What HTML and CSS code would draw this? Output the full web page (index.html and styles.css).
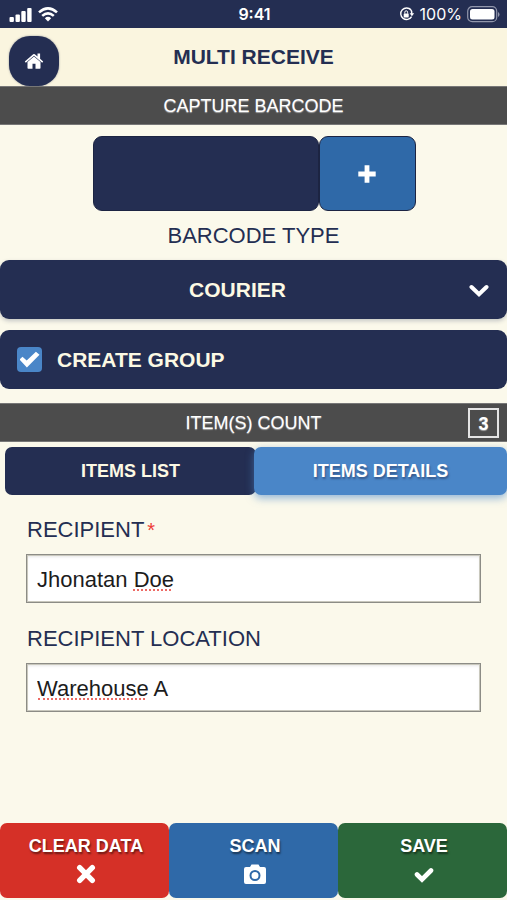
FILE: index.html
```html
<!DOCTYPE html>
<html lang="en">
<head>
<meta charset="utf-8">
<meta name="viewport" content="width=device-width, initial-scale=1">
<title>Multi Receive</title>
<link rel="stylesheet" href="styles.css">
</head>
<body>
<div class="status">
  <div class="status-left">
    <svg width="23" height="15" viewBox="0 0 23 15" fill="#fff" aria-hidden="true"><rect x=".5" y="10" width="4.400" height="5" rx="1"/><rect x="6.500" y="7.500" width="4.400" height="7.500" rx="1"/><rect x="12.300" y="4" width="4.400" height="11" rx="1"/><rect x="18.200" y="1" width="4.400" height="14" rx="1"/></svg>
    <svg width="20" height="15" viewBox="0 0 20 15" fill="none" stroke="#fff" stroke-width="2.6" aria-hidden="true"><path d="M1 5.4Q10-2.6 19 5.4M4.2 8.9Q10 3.7 15.8 8.9"/><path d="M6.8 11.2Q10 8.4 13.2 11.2L10 14.6Z" fill="#fff" stroke="none"/></svg>
  </div>
  <span class="time">9:41</span>
  <div class="status-right">
    <svg width="16" height="14" viewBox="0 0 16 14" aria-hidden="true"><path d="M12 3A5.8 5.8 0 1 0 12.6 9.6M11 1.8A5.8 5.8 0 0 1 12.8 7" fill="none" stroke="#fff" stroke-width="1.4"/><path d="M10.6 6.2h4.6l-2.3 3z" fill="#fff"/><rect x="4.7" y="6.4" width="5" height="4" rx=".6" fill="#fff"/><path d="M5.8 6.6V5.2a1.4 1.4 0 0 1 2.8 0v1.4" fill="none" stroke="#fff"/></svg>
    <span class="percent">100%</span>
    <svg width="33" height="17" viewBox="0 0 33 17" aria-hidden="true"><rect x=".7" y=".7" width="29" height="15" rx="4.5" fill="none" stroke="#9297ac" stroke-width="1.2"/><rect x="3" y="3" width="24.5" height="10.500" rx="2.500" fill="#fff"/><path d="M31 6v5q1.500-.8 1.500-2.500T31 6" fill="#9297ac"/></svg>
  </div>
</div>
<header class="header">
  <button class="home" type="button" aria-label="Home"><svg width="20" height="18" viewBox="0 0 20 18" fill="#fff" aria-hidden="true"><path d="M10 4.600 3.500 10v6q0 .8.8.8h4.200v-5h3v5h4.200q.8 0 .8-.8v-6z"/><path d="M.8 9.600 9.200 2.200q.8-.6 1.600 0L13.500 4.600V1.500h2.600v5.300l3.100 2.800-1 1.200L10 3.700 1.800 10.800z"/></svg></button>
  <h1>MULTI RECEIVE</h1>
</header>
<main>
  <h2 class="bar">CAPTURE BARCODE</h2>
  <div class="capture">
    <input class="code" type="text" aria-label="Barcode">
    <button class="add" type="button" aria-label="Add barcode"><svg width="18" height="18" viewBox="0 0 18 18" aria-hidden="true"><path d="M9 2.700v12.600M2.700 9h12.600" stroke="#fff" stroke-width="4.800" stroke-linecap="square" stroke-linejoin="round"/></svg></button>
  </div>
  <label class="type-label" for="type">BARCODE TYPE</label>
  <div class="select-wrap">
    <select id="type" class="panel"><option>COURIER</option></select>
    <svg class="chevron" width="20" height="14" viewBox="0 0 20 14" aria-hidden="true"><path d="m2.500 3 7.500 7.300L17.500 3" fill="none" stroke="#fff" stroke-width="4" stroke-linecap="round"/></svg>
  </div>
  <label class="panel group"><input type="checkbox" checked>CREATE GROUP</label>
  <h2 class="bar count-bar">ITEM(S) COUNT<span class="count">3</span></h2>
  <div class="tabs" role="tablist">
    <button type="button" role="tab" aria-selected="false">ITEMS LIST</button>
    <button type="button" role="tab" aria-selected="true" class="active">ITEMS DETAILS</button>
  </div>
  <form class="fields">
    <label for="recipient">RECIPIENT<span class="required">*</span></label>
    <div class="field"><input id="recipient" type="text" value="Jhonatan Doe"><span class="typo typo-name"></span></div>
    <label for="location">RECIPIENT LOCATION</label>
    <div class="field"><input id="location" type="text" value="Warehouse A"><span class="typo typo-place"></span></div>
  </form>
</main>
<footer class="actions">
  <button type="button" class="clear">CLEAR DATA<svg width="20" height="20" viewBox="0 0 20 20" aria-hidden="true"><path d="m3.700 3.700 12.600 12.600m0-12.600L3.700 16.300" stroke="#fff" stroke-width="5.400" stroke-linecap="round"/></svg></button>
  <button type="button" class="scan">SCAN<svg width="22" height="20" viewBox="0 0 22 20" aria-hidden="true"><path d="M2 3h4l1.500-2.500h7L16 3h4q2 0 2 2v13q0 2-2 2H2q-2 0-2-2V5q0-2 2-2" fill="#fff"/><circle cx="11" cy="11.500" r="4.500" fill="#fff" stroke="#2f69a8" stroke-width="2"/></svg></button>
  <button type="button" class="save">SAVE<svg width="20" height="20" viewBox="0 0 20 20" aria-hidden="true"><path d="m3 10.500 5 5L17 6.500" fill="none" stroke="#fff" stroke-width="4.600" stroke-linecap="round"/></svg></button>
</footer>
</body>
</html>
```
FILE: styles.css
```css
* { box-sizing: border-box; }
body {
  margin: 0;
  min-height: 100vh;
  display: flex;
  flex-direction: column;
  background: #fbf9eb;
  color: #242e52;
  font-family: "Liberation Sans", Arial, sans-serif;
  font-size: 22px;
  line-height: 24px;
}
button, input, select { font: inherit; margin: 0; border: 0; }
h1, h2 { margin: 0; }
svg { display: block; flex: none; }

.status {
  display: grid;
  grid-template-columns: 1fr auto 1fr;
  align-items: center;
  height: 28px;
  padding: 0 7px 0 9px;
  background: #242e52;
  color: #fff;
  font-family: Inter, "Liberation Sans", sans-serif;
  font-size: 16px;
}
.status-left, .status-right { display: flex; align-items: center; gap: 6px; }
.status-right { justify-content: flex-end; gap: 5px; }
.time { font-weight: 600; }

.header {
  display: grid;
  grid-template-columns: 50px 1fr 50px;
  align-items: center;
  height: 58px;
  padding: 0 9px;
  background: #faf5df;
  text-align: center;
}
.header h1 { font-size: 21px; }
.home {
  display: grid;
  place-items: center;
  width: 50px;
  height: 50px;
  margin-top: 8px;
  padding: 0;
  border-radius: 21px;
  background: #242e52;
  box-shadow: 0 0 2px #242e5280;
}

.bar {
  display: flex;
  align-items: center;
  justify-content: center;
  height: 39px;
  border-top: 1px solid #777;
  border-bottom: 1px solid #777;
  background: #4c4c4c;
  color: #fff;
  font-size: 18px;
  font-weight: 400;
  text-shadow: 0 1px 1px #ffffff80;
}
.capture {
  display: grid;
  grid-template-columns: 7fr 3fr;
  width: 64%;
  height: 75px;
  margin: 11px auto 13px;
  padding-left: 2px;
}
.code, .add { width: 100%; min-width: 0; border: 1px solid #1c2442; border-radius: 9px; }
.code { padding: 0 12px; background: #242e52; color: #fff; }
.add { display: grid; place-items: center; background: #2f69a8; }
.type-label { display: block; margin-bottom: 12px; text-align: center; }

.panel {
  display: flex;
  align-items: center;
  width: 100%;
  height: 59px;
  border-radius: 9px;
  background: #242e52;
  color: #fcf9e4;
  font-size: 21px;
  font-weight: 700;
}
.select-wrap { position: relative; margin-bottom: 11px; }
select.panel {
  appearance: none;
  padding: 0 32px 0 0;
  text-align-last: center;
  box-shadow: 0 2px 4px #242e5240;
}
.chevron { position: absolute; right: 18px; top: 24px; pointer-events: none; }
.group { gap: 15px; padding: 0 17px; margin-bottom: 14px; }
.group input {
  appearance: none;
  width: 25px;
  height: 25px;
  border-radius: 4px;
  background: #4a86c8;
  display: grid;
  place-items: center;
}
.group input:checked::before {
  content: "";
  width: 20px;
  height: 18px;
  background: #fff;
  clip-path: polygon(0 50%, 15% 35%, 36% 56%, 82% 7%, 100% 23%, 37% 94%);
}
.count-bar { display: grid; grid-template-columns: 1fr auto 1fr; padding: 0 8px; }
.count-bar::before { content: ""; }
.count {
  justify-self: end;
  width: 31px;
  height: 30px;
  border: 2px solid #e4e4e4;
  line-height: 28px;
  text-align: center;
  font-weight: 700;
}

.tabs { display: grid; grid-template-columns: 1fr 1fr; padding: 5px 0 0 5px; }
.tabs button {
  height: 48px;
  border-radius: 7px;
  background: #242e52;
  color: #fcf9e4;
  font-size: 18px;
  font-weight: 700;
}
.tabs .active {
  position: relative;
  margin-left: -2px;
  background: #4a86c8;
  color: #fff;
  text-shadow: 1px 2px 2px #242e5280;
  box-shadow: 0 3px 9px #4a86c899;
}
.fields { padding: 23px 26px 0; }
.fields label { display: block; margin-bottom: 12px; padding-left: 1px; }
.required { margin-left: 3px; color: #ee3c36; font-size: 20px; }
.field { position: relative; margin-bottom: 24px; }
.field input {
  display: block;
  width: 100%;
  height: 49px;
  padding: 2px 10px 0;
  border: 1px solid #8c8c86;
  outline: 1px solid #c9c8bd;
  outline-offset: -2px;
  background: #fff;
  color: #1c1c1c;
  box-shadow: inset 0 2px 3px #0000001a;
}
.typo { position: absolute; top: 35px; border-bottom: 2px dotted #ed6b65; }
.typo-name { left: 107px; width: 38px; }
.typo-place { left: 12px; width: 107px; }

.actions {
  display: grid;
  grid-template-columns: 1fr 1fr 1fr;
  margin-top: auto;
  padding-bottom: 2px;
}
.actions button {
  display: flex;
  flex-direction: column;
  align-items: center;
  gap: 6px;
  height: 75px;
  padding: 11px 0 0 3px;
  border-radius: 7px;
  color: #fff;
  font-size: 18px;
  font-weight: 700;
  text-shadow: 1px 2px 2px #00000080;
}
.actions .clear { background: #d53027; }
.actions .scan { background: #2f69a8; }
.actions .save { background: #2b673a; }
```
